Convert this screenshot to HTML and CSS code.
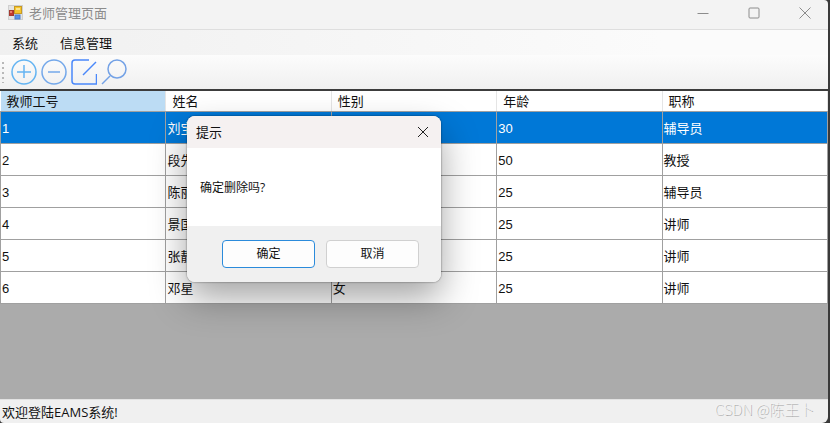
FILE: index.html
```html
<!DOCTYPE html>
<html lang="zh-CN">
<head>
    <meta charset="UTF-8">
    <meta name="viewport" content="width=device-width, initial-scale=1.0">
    <title>老师管理页面</title>
    <link rel="stylesheet" href="styles.css">
</head>
<body>

<div class="window">
    <header class="titlebar">
        <svg class="app-icon" width="16" height="16" viewBox="0 0 16 16">
            <rect x="0.5" y="0.5" width="14" height="14" fill="#e4e4e4" stroke="#cfcfcf"/>
            <rect x="1.5" y="5.5" width="4" height="5" fill="#c4382c" stroke="#a33a30"/>
            <rect x="2" y="6" width="2" height="2" fill="#e8806c"/>
            <rect x="7" y="10" width="5" height="4" fill="#5a94e8" stroke="#4a7cc8"/>
            <rect x="6.5" y="1.5" width="7" height="7" fill="#f7c52b" stroke="#c79a24"/>
            <rect x="8" y="3" width="4" height="2" fill="#fde58c"/>
        </svg>
        <h1>老师管理页面</h1>
        <div class="window-buttons">
            <button type="button" aria-label="最小化">
                <svg width="12" height="12" viewBox="0 0 12 12"><path d="M0.5 6.5h11"/></svg>
            </button>
            <button type="button" aria-label="最大化">
                <svg width="12" height="12" viewBox="0 0 12 12"><rect x="1" y="1" width="10" height="10" rx="1"/></svg>
            </button>
            <button type="button" aria-label="关闭">
                <svg width="12" height="12" viewBox="0 0 12 12"><path d="M0.5 0.5l11 11M11.5 0.5l-11 11"/></svg>
            </button>
        </div>
    </header>

    <nav class="menubar">
        <button type="button">系统</button>
        <button type="button">信息管理</button>
    </nav>

    <div class="toolbar">
        <svg class="grip" width="4" height="22" viewBox="0 0 4 22">
            <path d="M2 1v22" stroke="#b8b8b8" stroke-width="2" stroke-dasharray="2 3"/>
        </svg>
        <button type="button" aria-label="添加">
            <svg width="26" height="26" viewBox="0 0 26 26" stroke="#64b4f2">
                <circle cx="13" cy="13" r="12"/>
                <path d="M13 6v13M6 13h14"/>
            </svg>
        </button>
        <button type="button" aria-label="删除">
            <svg width="26" height="26" viewBox="0 0 26 26" stroke="#74a8ea">
                <circle cx="13" cy="13" r="12"/>
                <path d="M7 13h12"/>
            </svg>
        </button>
        <button type="button" aria-label="修改">
            <svg width="26" height="26" viewBox="0 0 26 26" stroke="#4a88fa">
                <path d="M18 1H4Q1 1 1 4V22Q1 25 4 25H25.500V15"/>
                <path d="M12 16L25 3"/>
            </svg>
        </button>
        <button type="button" aria-label="查找">
            <svg width="26" height="26" viewBox="0 0 26 26" stroke="#74a2e6">
                <circle cx="16" cy="10" r="9"/>
                <path d="M9 17L1 25"/>
            </svg>
        </button>
    </div>

    <main class="grid-area">
        <table class="teachers">
            <thead>
                <tr>
                    <th class="current">教师工号</th>
                    <th>姓名</th>
                    <th>性别</th>
                    <th>年龄</th>
                    <th>职称</th>
                </tr>
            </thead>
            <tbody>
                <tr class="selected"><td>1</td><td>刘宝</td><td></td><td>30</td><td>辅导员</td></tr>
                <tr><td>2</td><td>段先</td><td></td><td>50</td><td>教授</td></tr>
                <tr><td>3</td><td>陈丽</td><td></td><td>25</td><td>辅导员</td></tr>
                <tr><td>4</td><td>景国</td><td></td><td>25</td><td>讲师</td></tr>
                <tr><td>5</td><td>张静</td><td></td><td>25</td><td>讲师</td></tr>
                <tr><td>6</td><td>邓星</td><td>女</td><td>25</td><td>讲师</td></tr>
            </tbody>
        </table>
    </main>

    <footer class="statusbar">
        <span>欢迎登陆EAMS系统!</span>
        <span class="watermark">CSDN @陈王卜</span>
        <svg class="size-grip" width="12" height="12" viewBox="0 0 12 12" fill="#b4b4b4">
            <path d="M9 1h2v2h-2zM5 5h2v2h-2zM9 5h2v2h-2zM1 9h2v2h-2zM5 9h2v2h-2zM9 9h2v2h-2z"/>
        </svg>
    </footer>

    <div class="dialog" role="dialog" aria-labelledby="dialog-title">
        <div class="dialog-title">
            <h2 id="dialog-title">提示</h2>
            <button type="button" aria-label="关闭">
                <svg width="12" height="12" viewBox="0 0 12 12"><path d="M1 1l10 10M11 1L1 11"/></svg>
            </button>
        </div>
        <p class="dialog-text">确定删除吗?</p>
        <div class="dialog-buttons">
            <button type="button" class="default">确定</button>
            <button type="button">取消</button>
        </div>
    </div>
</div>

</body>
</html>
```

FILE: styles.css
```css
* {
    box-sizing: border-box;
}

body {
    margin: 0;
    background-color: #3a3a3a;
    color: #111;
    font-family: "Open Sans", "Noto Sans CJK SC", sans-serif;
    font-size: 13px;
    line-height: 20px;
}

button {
    margin: 0;
    padding: 0;
    border: none;
    background: none;
    color: inherit;
    font: inherit;
}

svg {
    display: block;
    fill: none;
}

h1, h2, p {
    margin: 0;
    font-size: 13px;
    font-weight: normal;
}

.window {
    position: relative;
    display: flex;
    flex-direction: column;
    height: 100vh;
    margin-right: 2px;
    border-radius: 0 4px 6px 4px;
    overflow: hidden;
}

.titlebar {
    display: flex;
    align-items: center;
    height: 30px;
    padding: 0 17px 4px 8px;
    gap: 5px;
    background-color: #f3f3f3;
    border-bottom: 1px solid #dedede;
    color: #8c8c8c;
}

.window-buttons {
    display: flex;
    gap: 39px;
    margin-left: auto;
    stroke: #8c8c8c;
}

.menubar {
    display: flex;
    align-items: center;
    gap: 22px;
    height: 25px;
    padding: 0 12px;
    background: linear-gradient(to right, #f0f0f0, #fbfbfb 80%);
}

.toolbar {
    display: flex;
    align-items: center;
    gap: 4px;
    height: 34px;
    padding: 0 1px;
    background: linear-gradient(#fcfcfc, #f0f0f0);
}

.toolbar svg {
    stroke-width: 1.5;
}

.grip {
    margin-right: 2px;
}

.grid-area {
    flex: 1;
    background-color: #ababab;
    border-top: 2px solid #3c3c3c;
}

.teachers {
    width: 100%;
    table-layout: fixed;
    border-collapse: collapse;
    background-color: #fff;
    line-height: 18px;
}

.teachers th {
    height: 20px;
    padding: 0 6px;
    border-right: 1px solid #e5e5e5;
    border-bottom: 1px solid #a0a0a0;
    font-weight: normal;
    text-align: left;
}

.teachers .current {
    background-color: #bcdcf4;
}

.teachers td {
    height: 32px;
    padding: 3px 1px 0;
    border: 1px solid #a0a0a0;
    font-family: "Liberation Sans", "Noto Sans CJK SC", sans-serif;
    font-size: 13px;
}

.selected {
    background-color: #0078d7;
    color: #fff;
}

.statusbar {
    display: flex;
    align-items: center;
    height: 24px;
    padding: 0 2px;
    background-color: #f0f0f0;
    border-top: 1px solid #e2e2e2;
}

.watermark {
    margin-left: auto;
    padding-bottom: 6px;
    color: #f4f4f4;
    font-family: "Noto Sans CJK SC", sans-serif;
    font-size: 15px;
    font-weight: 100;
    text-shadow: 1px 1px 0 #a4a4a4;
}

.size-grip {
    align-self: flex-end;
    margin-bottom: 2px;
}

/* message box over the window */
.dialog {
    position: absolute;
    top: 116px;
    left: 187px;
    width: 254px;
    border-radius: 8px;
    background-color: #fff;
    box-shadow: 0 0 2px rgba(0, 0, 0, 0.6), 0 16px 36px rgba(0, 0, 0, 0.36);
    overflow: hidden;
}

.dialog-title {
    display: flex;
    align-items: center;
    justify-content: space-between;
    height: 32px;
    padding: 0 12px 0 9px;
    background-color: #f5f1f1;
    stroke: #222;
}

.dialog-text {
    padding: 30px 13px 28px;
    font-size: 12px;
}

.dialog-buttons {
    display: flex;
    justify-content: flex-end;
    gap: 11px;
    padding: 14px 22px;
    background-color: #f0f0f0;
}

.dialog-buttons button {
    width: 93px;
    height: 28px;
    border: 1px solid #d0d0d0;
    border-radius: 4px;
    background-color: #fdfdfd;
    font-size: 12px;
}

.dialog-buttons .default {
    border-color: #2b8bdb;
}
```
